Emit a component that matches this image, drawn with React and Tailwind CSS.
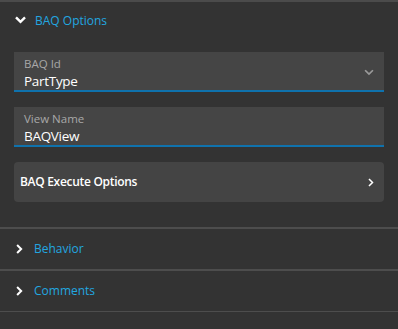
import React from "react";

const font = { fontFamily: '"Open Sans", "Noto Sans", sans-serif' };

const ChevronDown = ({ className, stroke = 2.6 }) => (
  <svg viewBox="0 0 12 8" className={className} fill="none" stroke="currentColor" strokeWidth={stroke} strokeLinecap="square">
    <path d="M2 2l4 4 4-4" />
  </svg>
);

const ChevronRight = ({ className, stroke = 2.4 }) => (
  <svg viewBox="0 0 8 12" className={className} fill="none" stroke="currentColor" strokeWidth={stroke} strokeLinecap="square">
    <path d="M2 2l4 4-4 4" />
  </svg>
);

const Field = ({ label, value, dropdown }) => (
  <div className="relative h-[40px] bg-[#454545] border-b-2 border-[#0f72ad] px-[10px] pt-[4px]">
    <div className="text-[11.5px] leading-[16px] text-[#a8a8a8]">{label}</div>
    <div className="text-[13.5px] leading-[18px] font-medium text-white tracking-[-0.3px]">{value}</div>
    {dropdown && (
      <ChevronDown className="absolute right-[10px] top-[17px] w-[10px] h-[7px] text-[#9a9a9a]" stroke={2} />
    )}
  </div>
);

const Section = ({ title }) => (
  <div className="h-[40px] flex items-center pl-[16px] gap-[11px]">
    <ChevronRight className="w-[7px] h-[10px] text-white" />
    <span className="text-[12px] text-[#22a7e0]">{title}</span>
  </div>
);

export default function App() {
  return (
    <div className="w-[398px] h-[329px] bg-[#333333] overflow-hidden" style={font}>
      <div className="h-[2px] bg-[#4b4b4b]" />
      <div className="h-[36px] flex items-center pl-[15px] gap-[9px]">
        <ChevronDown className="w-[11px] h-[8px] text-white" />
        <span className="text-[12px] leading-[16px] pt-[1px] text-[#22a7e0]">BAQ Options</span>
      </div>
      <div className="pt-[14px] pb-[25px] pl-[14px] pr-[14px] flex flex-col gap-[15px]">
        <Field label="BAQ Id" value="PartType" dropdown />
        <Field label="View Name" value="BAQView" />
        <div className="h-[40px] bg-[#444444] rounded-[4px] flex items-center justify-between pl-[6px] pr-[10px]">
          <span className="text-[12px] font-[560] text-white tracking-[-0.3px]">BAQ Execute Options</span>
          <ChevronRight className="w-[6px] h-[9px] text-white" stroke={2} />
        </div>
      </div>
      <div className="h-[2px] bg-[#4d4d4d]" />
      <Section title="Behavior" />
      <div className="h-[2px] bg-[#4d4d4d]" />
      <Section title="Comments" />
      <div className="h-[1px] bg-[#4d4d4d]" />
    </div>
  );
}
